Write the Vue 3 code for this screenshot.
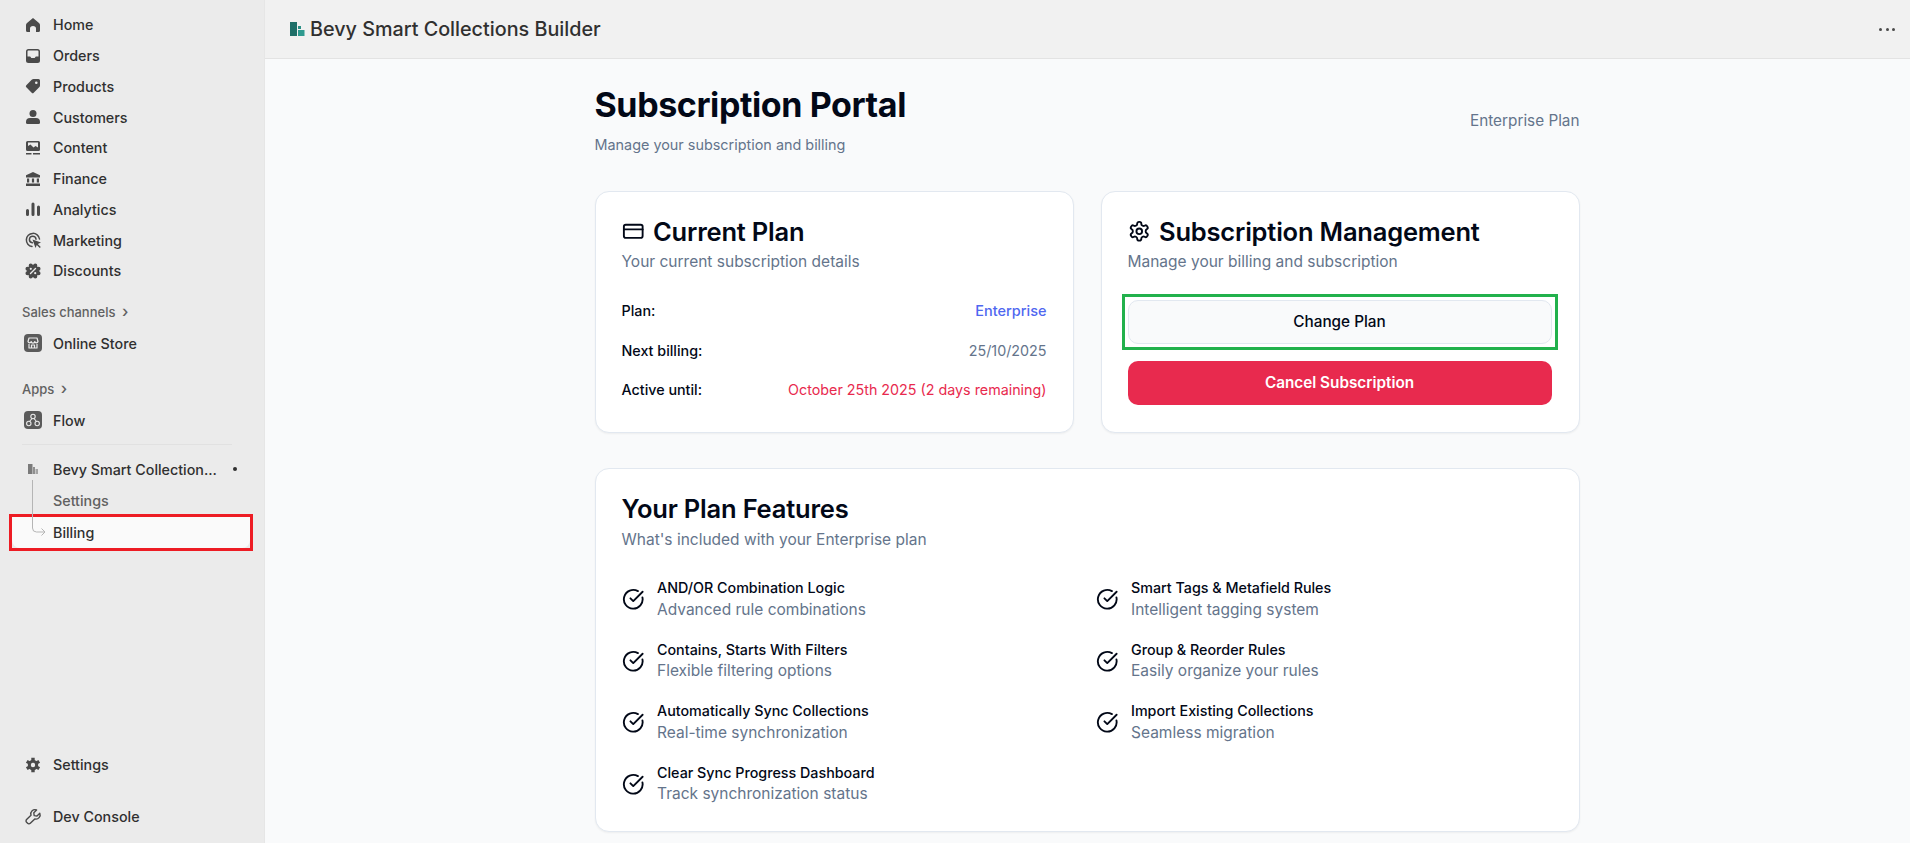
<template>
  <div class="shell">
    <aside class="sidebar">
      <nav class="group">
        <a class="row" v-for="item in mainNav" :key="item.label">
          <svg class="icon" viewBox="0 0 20 20">
            <path v-for="(p, i) in icons[item.icon]" :key="i" :d="p.d" :fill="p.w ? 'none' : (p.c || 'currentColor')" :stroke="p.w ? (p.c || 'currentColor') : 'none'" :stroke-width="p.w || 0" :fill-rule="p.e ? 'evenodd' : 'nonzero'" stroke-linecap="round" stroke-linejoin="round" />
          </svg>
          <span>{{ item.label }}</span>
        </a>
      </nav>

      <div class="section-title first">Sales channels <span class="chev">›</span></div>
      <a class="row">
        <svg class="icon" viewBox="0 0 20 20">
          <rect x="1" y="1" width="18" height="18" rx="4" fill="#5b5b5b" />
          <path d="M5 8.500 6 5h8l1 3.500a1.700 1.700 0 0 1-3.300 0 1.700 1.700 0 0 1-3.400 0 1.700 1.700 0 0 1-3.300 0zM6 11v4h8v-4M8.500 15v-3h3v3" fill="none" stroke="#ebebeb" stroke-width="1.200" stroke-linejoin="round" />
        </svg>
        <span>Online Store</span>
      </a>

      <div class="section-title second">Apps <span class="chev">›</span></div>
      <a class="row">
        <svg class="icon" viewBox="0 0 20 20">
          <rect x="1" y="1" width="18" height="18" rx="4" fill="#5b5b5b" />
          <path d="M9 8.500 6.500 11.500M11 8.500 13.500 11.500" stroke="#ebebeb" stroke-width="1.100" />
          <circle cx="10" cy="6.500" r="2.200" fill="none" stroke="#ebebeb" stroke-width="1.100" />
          <circle cx="5.800" cy="13.500" r="2.200" fill="none" stroke="#ebebeb" stroke-width="1.100" />
          <circle cx="14.200" cy="13.500" r="2.200" fill="none" stroke="#ebebeb" stroke-width="1.100" />
        </svg>
        <span>Flow</span>
      </a>

      <div class="divider"></div>

      <div class="app-block">
        <a class="row">
          <svg class="icon" viewBox="0 0 20 20">
            <path d="M5 5h4.500v10H5z" fill="#7a7a7a" />
            <path d="M10 8h2v7h-2z" fill="#8f8f8f" />
            <path d="M12.500 10H15v5h-2.500z" fill="#a5a5a5" />
          </svg>
          <span class="app-name">Bevy Smart Collection...</span>
          <i class="dot"></i>
        </a>
        <a class="row sub muted"><span>Settings</span></a>
        <div class="mark-red">
          <a class="row sub active"><span>Billing</span></a>
        </div>
        <svg class="tree" width="18" height="58" viewBox="0 0 18 58">
          <path d="M1.500 0V48q0 4 4 4H14M10.500 48.500 14 52l-3.500 3.500" fill="none" stroke="#b5b5b5" stroke-width="1" />
        </svg>
      </div>

      <div class="foot">
        <a class="row">
          <svg class="icon" viewBox="0 0 20 20">
            <path v-for="(p, i) in icons.cog" :key="i" :d="p.d" :fill="p.w ? 'none' : (p.c || 'currentColor')" :stroke="p.w ? 'currentColor' : 'none'" :stroke-width="p.w || 0" />
          </svg>
          <span>Settings</span>
        </a>
        <a class="row dev">
          <svg class="icon" viewBox="0 0 20 20">
            <path d="M16.800 6.200 14 9l-2.800-.4L10.800 5.800 13.600 3A4.200 4.200 0 0 0 8 8.200L3.600 12.600a1.900 1.900 0 0 0 0 2.700l1 1a1.900 1.900 0 0 0 2.700 0l4.500-4.400a4.200 4.200 0 0 0 5-5.700z" fill="none" stroke="currentColor" stroke-width="1.400" stroke-linejoin="round" />
          </svg>
          <span>Dev Console</span>
        </a>
      </div>
    </aside>

    <div class="main">
      <header class="topbar">
        <div class="brand">
          <svg width="15" height="14" viewBox="0 0 15 14">
            <path d="M0 0h7v14H0z" fill="#1f6f68" />
            <path d="M8 4h3v3H8z" fill="#2a8f85" />
            <path d="M8 8h6.500v6H8z" fill="#2f9a8f" />
          </svg>
          <span>Bevy Smart Collections Builder</span>
        </div>
        <div class="more"><i></i><i></i><i></i></div>
      </header>

      <main class="content">
        <div class="page">
          <div class="page-head">
            <div>
              <h1>Subscription Portal</h1>
              <p class="lead">Manage your subscription and billing</p>
            </div>
            <span class="tier">Enterprise Plan</span>
          </div>

          <div class="cards">
            <section class="card">
              <h2>
                <svg class="h-icon" viewBox="0 0 24 24" fill="none" stroke="currentColor" stroke-width="2" stroke-linecap="round" stroke-linejoin="round">
                  <rect x="2" y="5" width="20" height="14" rx="2" />
                  <line x1="2" y1="10" x2="22" y2="10" />
                </svg>
                Current Plan
              </h2>
              <p class="sub-text">Your current subscription details</p>
              <dl class="details">
                <div class="detail"><dt>Plan:</dt><dd class="blue">Enterprise</dd></div>
                <div class="detail"><dt>Next billing:</dt><dd>25/10/2025</dd></div>
                <div class="detail"><dt>Active until:</dt><dd class="red">October 25th 2025 (2 days remaining)</dd></div>
              </dl>
            </section>

            <section class="card">
              <h2>
                <svg class="h-icon" viewBox="0 0 24 24" fill="none" stroke="currentColor" stroke-width="2" stroke-linecap="round" stroke-linejoin="round">
                  <path d="M12.220 2h-.44a2 2 0 0 0-2 2v.18a2 2 0 0 1-1 1.730l-.43.25a2 2 0 0 1-2 0l-.15-.08a2 2 0 0 0-2.730.73l-.22.38a2 2 0 0 0 .73 2.730l.15.1a2 2 0 0 1 1 1.720v.51a2 2 0 0 1-1 1.740l-.15.09a2 2 0 0 0-.73 2.730l.22.38a2 2 0 0 0 2.730.73l.15-.08a2 2 0 0 1 2 0l.43.25a2 2 0 0 1 1 1.730V20a2 2 0 0 0 2 2h.44a2 2 0 0 0 2-2v-.18a2 2 0 0 1 1-1.730l.43-.25a2 2 0 0 1 2 0l.15.08a2 2 0 0 0 2.730-.73l.22-.39a2 2 0 0 0-.73-2.730l-.15-.08a2 2 0 0 1-1-1.740v-.5a2 2 0 0 1 1-1.740l.15-.09a2 2 0 0 0 .73-2.730l-.22-.38a2 2 0 0 0-2.730-.73l-.15.08a2 2 0 0 1-2 0l-.43-.25a2 2 0 0 1-1-1.730V4a2 2 0 0 0-2-2z" />
                  <circle cx="12" cy="12" r="3" />
                </svg>
                Subscription Management
              </h2>
              <p class="sub-text">Manage your billing and subscription</p>
              <div class="actions">
                <div class="mark-green">
                  <button class="btn outline">Change Plan</button>
                </div>
                <button class="btn danger">Cancel Subscription</button>
              </div>
            </section>
          </div>

          <section class="card features-card">
            <h2>Your Plan Features</h2>
            <p class="sub-text">What's included with your Enterprise plan</p>
            <div class="features">
              <div class="feature" v-for="f in features" :key="f.title">
                <svg class="check" viewBox="0 0 24 24" fill="none" stroke="currentColor" stroke-width="2" stroke-linecap="round" stroke-linejoin="round">
                  <path d="M21.801 10A10 10 0 1 1 17 3.335" />
                  <path d="m9 11 3 3L22 4" />
                </svg>
                <div>
                  <div class="f-title">{{ f.title }}</div>
                  <div class="f-desc">{{ f.desc }}</div>
                </div>
              </div>
            </div>
          </section>
        </div>
      </main>
    </div>
  </div>
</template>

<script setup>
const dot = (cx, cy, r) => `M${cx - r} ${cy}a${r} ${r} 0 1 0 ${r * 2} 0a${r} ${r} 0 1 0 ${-r * 2} 0z`

const badge = () => {
  let d = dot(10, 10, 6.2)
  for (let i = 0; i < 8; i++) {
    const a = (i * Math.PI) / 4 + Math.PI / 8
    d += dot(+(10 + 6 * Math.cos(a)).toFixed(2), +(10 + 6 * Math.sin(a)).toFixed(2), 2)
  }
  return d
}

const bg = '#ebebeb'

const icons = {
  home: [{ d: 'M10 3 16 8Q17 9 17 10V15.500Q17 17 15.500 17H13V13.500Q13 11 10 11 7 11 7 13.500V17H4.500Q3 17 3 15.500V10Q3 9 4 8Z' }],
  orders: [{ e: 1, d: 'M5.500 3h9A2.500 2.500 0 0 1 17 5.500v9a2.500 2.500 0 0 1-2.500 2.500h-9A2.500 2.500 0 0 1 3 14.500v-9A2.500 2.500 0 0 1 5.500 3zM5.500 4.500a1 1 0 0 0-1 1v5h2.700l1.100 1.500h3.400l1.100-1.500h2.700v-5a1 1 0 0 0-1-1z' }],
  tag: [{ e: 1, d: 'M17 4.500V9.500Q17 10.500 16.200 11.300L10.700 16.700Q9.700 17.700 8.700 16.700L3.300 11.300Q2.300 10.300 3.300 9.300L8.700 3.800Q9.500 3 10.500 3H15.500Q17 3 17 4.500ZM12 6.800a1.300 1.300 0 1 0 2.600 0a1.300 1.300 0 1 0-2.600 0z' }],
  person: [{ d: dot(10, 6.500, 3.500) }, { d: 'M3 15Q3 11 7 11H13Q17 11 17 15V15.500Q17 17 15.500 17H4.500Q3 17 3 15.500Z' }],
  content: [
    { e: 1, d: 'M4.500 3h11A1.500 1.500 0 0 1 17 4.500v7a1.500 1.500 0 0 1-1.500 1.500h-11A1.500 1.500 0 0 1 3 11.500v-7A1.500 1.500 0 0 1 4.500 3zM5 4.500v3.500l2.500-1.500 3 3 2-1.500 2.500 1.500V4.500z' },
    { d: 'M3 15h5.500v1.500H3zM10 15h7v1.500h-7z' }
  ],
  bank: [
    { d: 'M10 3 17 6.200V8.500H3V6.200Z' },
    { d: 'M4 9.500h2.200v4H4zM8.900 9.500h2.200v4H8.900zM13.800 9.500H16v4h-2.200zM3 14.500h14V17H3z' }
  ],
  bars: [{ d: 'M3 11.500a1.500 1.500 0 0 1 3 0V15.500a1.500 1.500 0 0 1-3 0zM8.500 5a1.500 1.500 0 0 1 3 0V15.500a1.500 1.500 0 0 1-3 0zM14 8a1.500 1.500 0 0 1 3 0V15.500a1.500 1.500 0 0 1-3 0z' }],
  target: [
    { w: 1.500, d: 'M9 16.500A6.600 6.600 0 1 1 16.500 9' },
    { w: 1.500, d: 'M9.300 12.800A3.300 3.300 0 1 1 13 9.300' },
    { d: 'M9.500 9.500 18 12.500 14.800 14 17.800 17 16.800 18 13.800 15 12.500 18Z' }
  ],
  badge: [
    { d: badge() },
    { w: 1.400, c: bg, d: 'M12.500 7.500 7.500 12.500' },
    { c: bg, d: dot(7.800, 7.800, 1.100) },
    { c: bg, d: dot(12.200, 12.200, 1.100) }
  ],
  cog: [
    { w: 3.400, d: 'M10 2.800V17.200M3.760 6.400 16.240 13.600M3.760 13.600 16.240 6.400' },
    { d: dot(10, 10, 5.200) },
    { c: bg, d: dot(10, 10, 2.200) }
  ]
}

const mainNav = [
  { label: 'Home', icon: 'home' },
  { label: 'Orders', icon: 'orders' },
  { label: 'Products', icon: 'tag' },
  { label: 'Customers', icon: 'person' },
  { label: 'Content', icon: 'content' },
  { label: 'Finance', icon: 'bank' },
  { label: 'Analytics', icon: 'bars' },
  { label: 'Marketing', icon: 'target' },
  { label: 'Discounts', icon: 'badge' }
]

const features = [
  { title: 'AND/OR Combination Logic', desc: 'Advanced rule combinations' },
  { title: 'Smart Tags & Metafield Rules', desc: 'Intelligent tagging system' },
  { title: 'Contains, Starts With Filters', desc: 'Flexible filtering options' },
  { title: 'Group & Reorder Rules', desc: 'Easily organize your rules' },
  { title: 'Automatically Sync Collections', desc: 'Real-time synchronization' },
  { title: 'Import Existing Collections', desc: 'Seamless migration' },
  { title: 'Clear Sync Progress Dashboard', desc: 'Track synchronization status' }
]
</script>

<style scoped>
.shell {
  display: flex;
  height: 843px;
  overflow: hidden;
  font-family: Inter, "Noto Sans", sans-serif;
}

/* sidebar */
.sidebar {
  width: 264px;
  flex-shrink: 0;
  background: #ebebeb;
  border-right: 1px solid #e6e6e6;
  padding-top: 9.500px;
  display: flex;
  flex-direction: column;
  color: #303030;
}

.row {
  display: flex;
  align-items: center;
  height: 30.750px;
  padding-left: 23px;
  font-size: 14.300px;
  font-weight: 450;
  color: #303030;
  flex-shrink: 0;
}

.icon {
  width: 20px;
  height: 20px;
  margin-right: 10px;
  color: #4a4a4a;
  flex-shrink: 0;
}

.section-title {
  padding-left: 22px;
  font-size: 13px;
  font-weight: 500;
  color: #616161;
  height: 18px;
  line-height: 18px;
}

.section-title.first {
  margin-top: 15.500px;
  margin-bottom: 8px;
}

.section-title.second {
  margin-top: 20px;
  margin-bottom: 8.500px;
}

.chev {
  font-size: 16px;
  margin-left: 3px;
}

.divider {
  height: 1px;
  background: #e1e1e1;
  margin: 8px 32px 9px 22px;
}

.app-block {
  position: relative;
}

.app-name {
  white-space: nowrap;
}

.dot {
  width: 4px;
  height: 4px;
  border-radius: 50%;
  background: #303030;
  margin-left: 16px;
}

.sub {
  padding-left: 53px;
}

.muted {
  color: #616161;
  margin-top: 1px;
}

.mark-red {
  border: 3px solid #ed1c24;
  margin: 0 11px -3px 9px;
  position: relative;
  top: -2px;
}

.active {
  padding-left: 41px;
  background: #fafafa;
  border-radius: 0 0 8px 8px;
  font-weight: 550;
}

.tree {
  position: absolute;
  left: 31px;
  top: 26px;
}

.foot {
  margin-top: auto;
  padding-bottom: 11px;
}

.dev {
  margin-top: 21px;
}

/* top bar */
.main {
  flex: 1;
  min-width: 0;
  display: flex;
  flex-direction: column;
  background: #f9fafb;
}

.topbar {
  height: 59px;
  flex-shrink: 0;
  box-sizing: border-box;
  background: #f1f1f1;
  border-bottom: 1px solid #e3e3e3;
  display: flex;
  align-items: center;
  justify-content: space-between;
  padding: 0 15px 0 25px;
}

.brand {
  display: flex;
  align-items: center;
  gap: 5px;
  font-size: 19.750px;
  font-weight: 500;
  color: #303030;
}

.more {
  display: flex;
  gap: 3.500px;
}

.more i {
  width: 3px;
  height: 3px;
  border-radius: 50%;
  background: #4a4a4a;
}

/* page */
.content {
  flex: 1;
  display: flex;
  justify-content: center;
  padding-right: 1px;
}

.page {
  width: 985px;
  color: #020817;
}

.page-head {
  display: flex;
  justify-content: space-between;
  align-items: center;
  padding-top: 26px;
  margin-bottom: 36px;
}

h1 {
  margin: 0;
  font-size: 34px;
  line-height: 40px;
  font-weight: 700;
  letter-spacing: -0.400px;
}

.lead {
  margin: 9.500px 0 0;
  font-size: 14.400px;
  line-height: 20px;
  color: #64748b;
}

.tier {
  font-size: 15.300px;
  color: #64748b;
  margin-top: 2px;
}

.cards {
  display: grid;
  grid-template-columns: 1fr 1fr;
  gap: 27px;
}

.card {
  box-sizing: border-box;
  background: #fff;
  border: 1px solid #e2e8f0;
  border-radius: 14px;
  padding: 25px 26px 26px;
  height: 242px;
  box-shadow: 0 1px 2px rgba(0, 0, 0, 0.05);
}

h2 {
  margin: 0;
  display: flex;
  align-items: center;
  gap: 9px;
  font-size: 25.500px;
  line-height: 30px;
  font-weight: 600;
  letter-spacing: -0.200px;
}

.h-icon {
  width: 22.500px;
  height: 22.500px;
}

.sub-text {
  margin: 5.500px 0 0;
  font-size: 15.500px;
  line-height: 20px;
  color: #64748b;
}

.details {
  margin: 28.500px 0 0;
}

.detail {
  display: flex;
  justify-content: space-between;
  align-items: center;
  height: 20px;
  margin-bottom: 19.500px;
  font-size: 14.300px;
}

.detail dt {
  font-weight: 450;
}

.detail dd {
  margin: 0;
  color: #64748b;
}

.detail dd.blue {
  color: #4f67f0;
  font-size: 14.500px;
  font-weight: 500;
}

.detail dd.red {
  color: #e82a4e;
}

.actions {
  margin-top: 27.500px;
  margin-right: 1px;
  display: flex;
  flex-direction: column;
  gap: 17px;
}

.mark-green {
  border: 3px solid #22b14c;
  padding: 3px;
  margin: -6px;
  display: flex;
}

.btn {
  width: 100%;
  height: 44px;
  border-radius: 10px;
  font-family: inherit;
  font-size: 15.300px;
  font-weight: 450;
  cursor: pointer;
}

.btn.outline {
  background: #f9fafb;
  border: 1px solid #e2e8f0;
  color: #020817;
}

.btn.danger {
  background: #e82a4e;
  border: none;
  color: #fff;
  font-weight: 600;
}

.features-card {
  margin-top: 35.500px;
  height: 364px;
}

.features {
  margin-top: 28px;
  display: grid;
  grid-template-columns: 1fr 1fr;
  column-gap: 17px;
  row-gap: 17.500px;
}

.feature {
  display: flex;
  align-items: center;
  gap: 13px;
  height: 44px;
}

.check {
  width: 22.500px;
  height: 22.500px;
  flex-shrink: 0;
}

.f-title {
  font-size: 14.300px;
  line-height: 20.500px;
  font-weight: 450;
}

.f-desc {
  font-size: 15.500px;
  line-height: 22px;
  color: #64748b;
}
</style>

<style>
html, body {
  margin: 0;
  overflow: hidden;
}
</style>
